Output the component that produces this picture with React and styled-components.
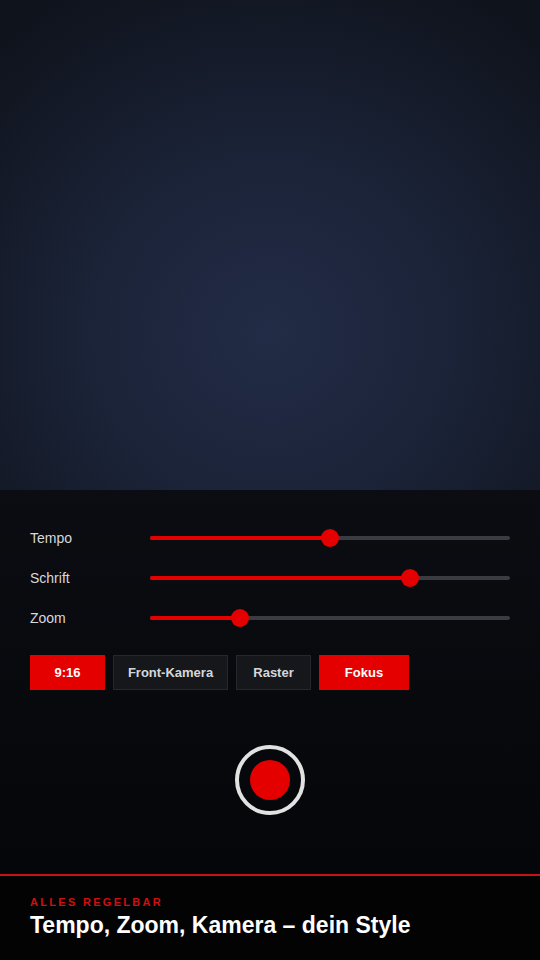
import React from "react";
import styled, { createGlobalStyle } from "styled-components";

const GlobalStyle = createGlobalStyle`
  html, body {
    margin: 0;
    padding: 0;
    background: #000;
    font-family: "Liberation Sans", Arial, sans-serif;
  }
`;

const sliders = [
  { label: "Tempo", value: 50 },
  { label: "Schrift", value: 72.2 },
  { label: "Zoom", value: 25 },
];

const chips = [
  { label: "9:16", active: true, width: 75 },
  { label: "Front-Kamera", active: false, width: 115 },
  { label: "Raster", active: false, width: 75 },
  { label: "Fokus", active: true, width: 90 },
];

const App = () => {
  return (
    <>
      <GlobalStyle />
      <Screen>
        <Preview />
        <Controls>
          <SliderList>
            {sliders.map((s) => (
              <SliderRow key={s.label}>
                <Label>{s.label}</Label>
                <Track>
                  <Fill style={{ width: `${s.value}%` }} />
                  <Thumb style={{ left: `${s.value}%` }} />
                </Track>
              </SliderRow>
            ))}
          </SliderList>
          <ChipRow>
            {chips.map((c) => (
              <Chip key={c.label} $active={c.active} $width={c.width}>
                {c.label}
              </Chip>
            ))}
          </ChipRow>
          <RecordWrap>
            <RecordButton>
              <RecordDot />
            </RecordButton>
          </RecordWrap>
        </Controls>
        <Footer>
          <Kicker>ALLES REGELBAR</Kicker>
          <Headline>Tempo, Zoom, Kamera – dein Style</Headline>
        </Footer>
      </Screen>
    </>
  );
};

const Screen = styled.div`
  width: 540px;
  height: 960px;
  display: flex;
  flex-direction: column;
  overflow: hidden;
`;

const Preview = styled.div`
  height: 490px;
  flex-shrink: 0;
  background: radial-gradient(
    ellipse 75% 80% at 50% 68%,
    #222c46 0%,
    #1b2338 45%,
    #141a28 75%,
    #0f131c 100%
  );
`;

const Controls = styled.div`
  height: 384px;
  flex-shrink: 0;
  box-sizing: border-box;
  padding: 38px 30px 0 30px;
  background: linear-gradient(180deg, #0b0d12 0%, #050609 100%);
  display: flex;
  flex-direction: column;
`;

const SliderList = styled.div`
  display: flex;
  flex-direction: column;
  gap: 20px;
`;

const SliderRow = styled.div`
  display: flex;
  align-items: center;
  height: 20px;
`;

const Label = styled.span`
  width: 120px;
  color: #d8d8dc;
  font-size: 14px;
`;

const Track = styled.div`
  position: relative;
  flex: 1;
  height: 4px;
  border-radius: 2px;
  background: #3b3c41;
`;

const Fill = styled.div`
  height: 100%;
  border-radius: 2px;
  background: #e50000;
`;

const Thumb = styled.div`
  position: absolute;
  top: 50%;
  width: 18px;
  height: 18px;
  border-radius: 50%;
  background: #e50000;
  transform: translate(-50%, -50%);
`;

const ChipRow = styled.div`
  display: flex;
  gap: 8px;
  margin-top: 27px;
`;

const Chip = styled.div`
  width: ${(p) => p.$width}px;
  height: 35px;
  box-sizing: border-box;
  display: flex;
  align-items: center;
  justify-content: center;
  font-size: 13px;
  font-weight: 700;
  color: ${(p) => (p.$active ? "#fff" : "#d6d6da")};
  background: ${(p) => (p.$active ? "#e50000" : "#15171b")};
  border: 1px solid ${(p) => (p.$active ? "#e50000" : "#25272c")};
`;

const RecordWrap = styled.div`
  display: flex;
  justify-content: center;
  margin-top: 55px;
`;

const RecordButton = styled.div`
  width: 70px;
  height: 70px;
  box-sizing: border-box;
  border-radius: 50%;
  border: 4px solid #e2e2e2;
  display: flex;
  align-items: center;
  justify-content: center;
`;

const RecordDot = styled.div`
  width: 40px;
  height: 40px;
  border-radius: 50%;
  background: #e50000;
`;

const Footer = styled.div`
  flex: 1;
  border-top: 2px solid #c41414;
  background: #030304;
  padding: 19px 30px 0 30px;
  display: flex;
  flex-direction: column;
`;

const Kicker = styled.div`
  color: #d01010;
  font-size: 11px;
  font-weight: 700;
  letter-spacing: 2.3px;
  line-height: 14px;
`;

const Headline = styled.div`
  color: #fff;
  font-size: 23px;
  font-weight: 700;
  line-height: 26px;
  margin-top: 3px;
`;

export default App;
